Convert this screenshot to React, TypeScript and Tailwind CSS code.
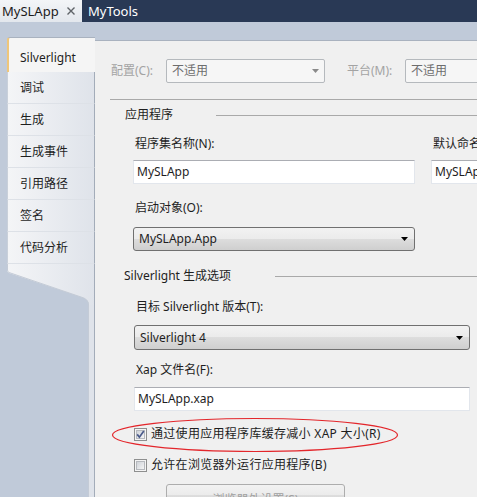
import React from "react";

function Arrow({ color = "#000" }: { color?: string }) {
  return (
    <svg width="7" height="4" viewBox="0 0 7 4" className="shrink-0">
      <path d="M0 0H7L3.5 4Z" fill={color} />
    </svg>
  );
}

function CheckBox({ checked }: { checked?: boolean }) {
  return (
    <svg width="13" height="13" viewBox="0 0 13 13" className="shrink-0">
      <defs>
        <linearGradient id={checked ? "cbg1" : "cbg2"} x1="0" y1="0" x2="1" y2="1">
          <stop offset="0" stopColor="#cdd1d7" />
          <stop offset="1" stopColor="#f7f7f7" />
        </linearGradient>
      </defs>
      <rect x="0.5" y="0.5" width="12" height="12" fill="#f4f4f4" stroke="#8e8f8f" />
      <rect x="2.5" y="2.5" width="8" height="8" fill={`url(#${checked ? "cbg1" : "cbg2"})`} stroke="#b6b9be" />
      {checked && <path d="M3.2 6.4L5.4 9.2L9.8 3" fill="none" stroke="#4a5a8a" strokeWidth="1.7" />}
    </svg>
  );
}

function TextBox({ value, w }: { value: string; w: string }) {
  return (
    <div
      className={`${w} flex h-[24px] shrink-0 items-center border border-[#e2e6ec] border-t-[#abadb3] bg-white pl-[3px] text-[12px] text-[#1e1e1e]`}
    >
      {value}
    </div>
  );
}

function Combo({ value, w, h = "h-[24px]" }: { value: string; w: string; h?: string }) {
  return (
    <div
      className={`${w} ${h} flex shrink-0 items-center rounded-[3px] border border-[#707070] bg-[linear-gradient(#f2f2f2_0%,#ebebeb_50%,#dddddd_50%,#cfcfcf_100%)] pl-[5px] pr-[6px]`}
    >
      <span className="flex-1">{value}</span>
      <Arrow />
    </div>
  );
}

const rows = ["调试", "生成", "生成事件", "引用路径", "签名", "代码分析"];

export default function App() {
  return (
    <div className="relative h-[497px] w-[477px] overflow-hidden bg-[#c0cad9] font-['Noto_Sans','Noto_Sans_CJK_SC',sans-serif] text-[12px] leading-[16px] text-[#1e1e1e]">
      {/* document tab bar */}
      <div className="flex h-[22px] bg-[#293955]">
        <div className="flex w-[82px] shrink-0 items-center bg-[linear-gradient(#f3f5f8,#e3e7ed)] pl-[2px]">
          <span className="text-[13px] text-[#1b1b1b]">MySLApp</span>
          <svg width="8" height="8" viewBox="0 0 8 8" className="ml-auto mr-[7px]">
            <path d="M0.5 0.5L7.5 7.5M7.5 0.5L0.5 7.5" stroke="#5f6368" strokeWidth="1.4" />
          </svg>
        </div>
        <div className="flex items-center pl-[6px] text-[13px] text-white">MyTools</div>
      </div>
      <div className="h-[15px] bg-[#c0cad9]" />

      <div className="flex h-[460px]">
        <div className="w-[7px] shrink-0" />
        {/* left tab list */}
        <div className="flex w-[88px] shrink-0 flex-col">
          <div className="flex h-[35px] shrink-0 items-center rounded-tl-[3px] border-l-2 border-t border-l-[#efc67a] border-t-[#a9b2bf] bg-[#f5f5f5] pl-[11px] pt-[5px]">
            Silverlight
          </div>
          {rows.map((r) => (
            <div
              key={r}
              className="flex h-[32px] shrink-0 items-center border-b border-l border-r border-b-[#dde1e7] border-l-[#c9d0da] border-r-[#a3acb9] bg-[linear-gradient(90deg,#f4f5f7,#dfe3ea)] pl-[12px] pt-[1px]"
            >
              {r}
            </div>
          ))}
          <svg width="88" height="41" viewBox="0 0 88 41" className="shrink-0">
            <defs>
              <linearGradient id="lg" x1="0" x2="1" y1="0" y2="0">
                <stop offset="0" stopColor="#f4f5f7" />
                <stop offset="1" stopColor="#dfe3ea" />
              </linearGradient>
            </defs>
            <path d="M0 0H88V41H82Q82 35 74 33L2 9Q0 8 0 6Z" fill="url(#lg)" />
            <path d="M0.5 0V6Q0.5 8 2 8.5L74 33Q81.5 35 81.5 41" fill="none" stroke="#c4cbd6" />
            <path d="M87.5 0V41" stroke="#a3acb9" />
          </svg>
          <div className="ml-[81px] flex-1 border-l border-r border-l-[#c4cbd6] border-r-[#a3acb9] bg-[#dfe3ea]" />
        </div>

        {/* content */}
        <div className="mt-[3px] flex min-w-0 flex-1 flex-col overflow-hidden border-t border-[#a9b2bf] bg-[#f0f0f0]">
          {/* config row */}
          <div className="mt-[18px] flex h-[24px] items-center pl-[16px] text-[#a3a3a3]">
            <span className="w-[55px] shrink-0">配置(C):</span>
            <div className="flex h-[24px] w-[159px] shrink-0 items-center rounded-[2px] border border-[#b5b9bd] bg-[#f6f6f6] pl-[5px] pr-[5px] text-[#6d6d6d]">
              <span className="flex-1">不适用</span>
              <Arrow color="#8a8a8a" />
            </div>
            <span className="ml-[22px] w-[58px] shrink-0">平台(M):</span>
            <div className="flex h-[24px] w-[80px] shrink-0 items-center rounded-[2px] border border-[#b5b9bd] bg-[#f6f6f6] pl-[5px] text-[#6d6d6d]">
              不适用
            </div>
          </div>

          <div className="ml-[15px] mt-[16px] h-px shrink-0 bg-[#a9a9a9]" />

          {/* 应用程序 group */}
          <div className="mt-[7px] flex h-[16px] items-center pl-[30px]">
            <span className="shrink-0">应用程序</span>
            <div className="ml-[43px] h-px flex-1 bg-[#a9a9a9]" />
          </div>

          <div className="mt-[13px] flex gap-[16px] pl-[38px]">
            <div className="flex w-[282px] shrink-0 flex-col">
              <span className="pl-[2px]">程序集名称(N):</span>
              <div className="mt-[8px]">
                <TextBox value="MySLApp" w="w-[282px]" />
              </div>
              <span className="mt-[16px] pl-[2px]">启动对象(O):</span>
              <div className="mt-[11px]">
                <Combo value="MySLApp.App" w="w-[282px]" />
              </div>
            </div>
            <div className="flex w-[120px] shrink-0 flex-col">
              <span className="whitespace-nowrap pl-[2px]">默认命名空间(L):</span>
              <div className="mt-[8px]">
                <TextBox value="MySLApp" w="w-[120px]" />
              </div>
            </div>
          </div>

          {/* Silverlight group */}
          <div className="mt-[17px] flex h-[16px] items-center pl-[29px]">
            <span className="shrink-0">Silverlight 生成选项</span>
            <div className="ml-[44px] h-px flex-1 bg-[#a9a9a9]" />
          </div>

          <div className="flex flex-col pl-[39px]">
            <span className="mt-[15px] pl-[2px]">目标 Silverlight 版本(T):</span>
            <div className="mt-[10px]">
              <Combo value="Silverlight 4" w="w-[336px]" h="h-[25px]" />
            </div>
            <span className="mt-[12px] pl-[2px]">Xap 文件名(F):</span>
            <div className="mt-[9px]">
              <TextBox value="MySLApp.xap" w="w-[336px]" />
            </div>
            <div className="mt-[15px] flex h-[16px] items-center gap-[4px]">
              <CheckBox checked />
              <span className="whitespace-nowrap tracking-[0.3px]">通过使用应用程序库缓存减小 XAP 大小(R)</span>
            </div>
            <div className="mt-[15px] flex h-[16px] items-center gap-[4px]">
              <CheckBox />
              <span className="whitespace-nowrap tracking-[0.3px]">允许在浏览器外运行应用程序(B)</span>
            </div>
            <div className="ml-[32px] mt-[11px] flex h-[23px] w-[179px] shrink-0 items-start justify-center rounded-[3px] border border-[#adadad] bg-[linear-gradient(#f2f2f2_0%,#ebebeb_50%,#dddddd_50%,#cfcfcf_100%)] pt-[7px] text-[#a0a0a0]">
              浏览器外设置(S)
            </div>
          </div>
        </div>
      </div>

      {/* red annotation ellipse */}
      <svg className="pointer-events-none absolute left-[111px] top-[417px]" width="288" height="36" viewBox="0 0 288 36">
        <ellipse cx="144" cy="18" rx="142.5" ry="16.5" fill="none" stroke="#e3262b" strokeWidth="1.2" />
      </svg>
    </div>
  );
}
